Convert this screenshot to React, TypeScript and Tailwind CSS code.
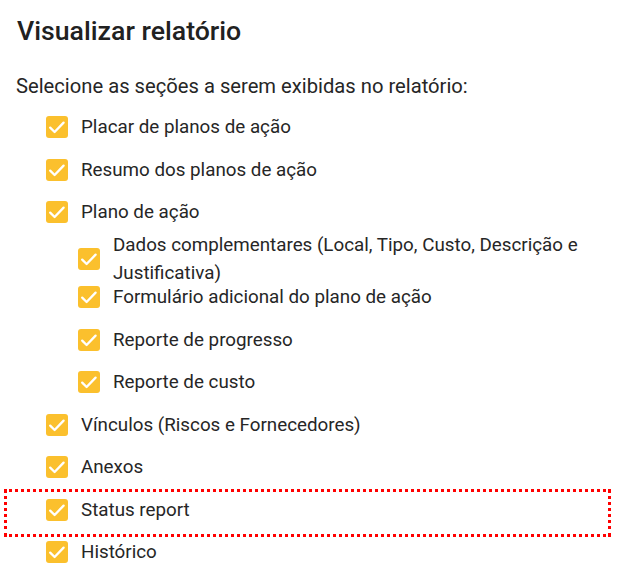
import React from 'react'

interface Item {
  label: string
  sub?: boolean
  tall?: boolean
  highlight?: boolean
}

const items: Item[] = [
  { label: 'Placar de planos de ação' },
  { label: 'Resumo dos planos de ação' },
  { label: 'Plano de ação' },
  { label: 'Dados complementares (Local, Tipo, Custo, Descrição e Justificativa)', sub: true, tall: true },
  { label: 'Formulário adicional do plano de ação', sub: true },
  { label: 'Reporte de progresso', sub: true },
  { label: 'Reporte de custo', sub: true },
  { label: 'Vínculos (Riscos e Fornecedores)' },
  { label: 'Anexos' },
  { label: 'Status report', highlight: true },
  { label: 'Histórico' },
]

function CheckBox() {
  return (
    <span className="flex h-[22px] w-[22px] shrink-0 rounded-[3px] bg-[#fbc02d]">
      <svg width="22" height="22" viewBox="0 0 22 22" fill="none">
        <path d="M4.2 11.6 L8.6 16 L17.6 6.6" stroke="white" strokeWidth="2.3" strokeLinecap="round" strokeLinejoin="round" />
      </svg>
    </span>
  )
}

function Row({ item }: { item: Item }) {
  return (
    <div
      className={`relative flex h-[42.5px] items-center gap-[13px] ${item.sub ? 'pl-[78px]' : 'pl-[46px]'} ${
        item.tall ? 'pt-2' : ''
      }`}
    >
      {item.highlight && (
        <div className="pointer-events-none absolute left-[4px] right-[17px] top-0 bottom-[-5.5px] border-[3px] border-dotted border-[#ff0000]" />
      )}
      <CheckBox />
      <span className="pr-4 text-[18.8px] leading-[28px] text-[#262626]">{item.label}</span>
    </div>
  )
}

export default function App() {
  return (
    <div className="h-[588px] w-[628px] bg-white font-['Roboto',sans-serif]">
      <h2 className="pl-[17px] pt-[15px] text-[26.7px] font-medium leading-[32px] text-[#212121]">
        Visualizar relatório
      </h2>
      <p className="mt-[25px] pl-[16px] text-[20.2px] leading-[28px] text-[#262626]">
        Selecione as seções a serem exibidas no relatório:
      </p>
      <div className="mt-[6px] flex flex-col">
        {items.map((it) => (
          <Row key={it.label} item={it} />
        ))}
      </div>
    </div>
  )
}
